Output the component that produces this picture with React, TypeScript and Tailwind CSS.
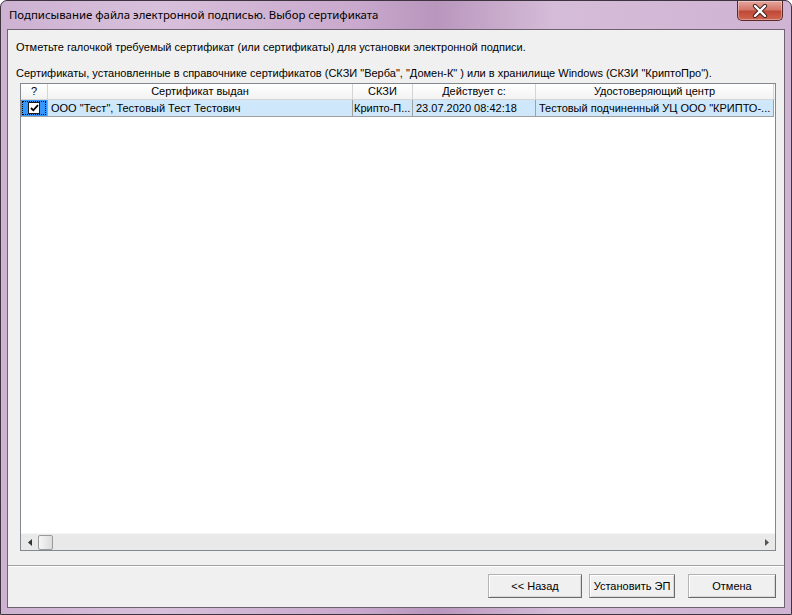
import React from "react";

const F = { fontFamily: '"Liberation Sans", Arial, sans-serif' };

function CloseBtn() {
  return (
    <div className="absolute right-[8px] top-0 flex h-[20px] w-[46px] items-center justify-center rounded-b-[5px] border border-t-0 border-[#5a2a2a] bg-[linear-gradient(#e4a89e_0%,#d4766a_45%,#c04a38_55%,#cf6450_100%)] shadow-[inset_0_0_0_1px_rgba(255,255,255,0.35)]">
      <svg width="16" height="14" viewBox="0 0 16 14">
        <path d="M3 2 L13 12 M13 2 L3 12" stroke="#3a1a1a" strokeWidth="4.2" strokeLinecap="round" />
        <path d="M3 2 L13 12 M13 2 L3 12" stroke="#ffffff" strokeWidth="2.4" strokeLinecap="round" />
      </svg>
    </div>
  );
}

function Cell({ w, children, className = "" }: { w: string; children?: React.ReactNode; className?: string }) {
  return (
    <div className={`${w} shrink-0 overflow-hidden whitespace-nowrap ${className}`}>{children}</div>
  );
}

export default function App() {
  return (
    <div
      className="relative h-[615px] w-[792px] overflow-hidden rounded-t-[7px] border border-[#3e3440] bg-[linear-gradient(90deg,#cdb2d2_0%,#d8c0db_20%,#c9a9cd_45%,#b996bd_55%,#d5bcd8_70%,#cfb4d3_100%)] text-[11px] text-black"
      style={F}
    >
      <div className="flex h-[28px] items-center pl-[8px]">
        <span className="text-[11.4px] leading-none" style={{ fontFamily: '"Noto Sans", "Open Sans", sans-serif' }}>
          Подписывание файла электронной подписью. Выбор сертификата
        </span>
      </div>
      <CloseBtn />
      <div className="mx-[6px] flex h-[579px] flex-col border border-[#6e6170] bg-[#f0f0f0]">
        <div className="pl-[8px] pt-[10px] leading-[14px]">
          Отметьте галочкой требуемый сертификат (или сертификаты) для установки электронной подписи.
        </div>
        <div className="mt-[12px] pl-[8px] leading-[14px]">
          Сертификаты, установленные в справочнике сертификатов (СКЗИ "Верба", "Домен-К" ) или в хранилище Windows (СКЗИ "КриптоПро").
        </div>
        <div className="ml-[12px] mt-[3px] flex h-[468px] w-[756px] flex-col border border-[#828790] bg-white">
          {/* header */}
          <div className="flex h-[16px] border-b border-[#d5d5d5] bg-[linear-gradient(#ffffff,#f3f3f3)] leading-[15px]">
            <Cell w="w-[27px]" className="border-r border-[#d5d5d5] text-center">?</Cell>
            <Cell w="w-[305px]" className="border-r border-[#d5d5d5] text-center">Сертификат выдан</Cell>
            <Cell w="w-[60px]" className="border-r border-[#d5d5d5] text-center">СКЗИ</Cell>
            <Cell w="w-[123px]" className="border-r border-[#d5d5d5] text-center">Действует с:</Cell>
            <Cell w="w-[238px]" className="border-r border-[#d5d5d5] text-center">Удостоверяющий центр</Cell>
          </div>
          {/* row */}
          <div className="flex h-[17px] w-[753px] border-b border-[#a0a0a0] leading-[16px]">
            <Cell w="w-[27px]" className="border-r border-[#a0a0a0] bg-[#3399ff] p-[1px]">
              <div className="flex h-full w-full items-center justify-center border border-dotted border-black">
                <div className="flex h-[12px] w-[12px] items-center justify-center border border-[#1c1c1c] bg-white">
                  <svg width="9" height="8" viewBox="0 0 9 8">
                    <path d="M1 4 L3.3 6.3 L8 1.2" stroke="#000" strokeWidth="1.8" fill="none" />
                  </svg>
                </div>
              </div>
            </Cell>
            <Cell w="w-[305px]" className="border-r border-[#a0a0a0] bg-[#cfe7fb] pl-[3px]">ООО "Тест", Тестовый Тест Тестович</Cell>
            <Cell w="w-[60px]" className="border-r border-[#a0a0a0] bg-[#cfe7fb] pl-[1px]">Крипто-П...</Cell>
            <Cell w="w-[123px]" className="border-r border-[#a0a0a0] bg-[#cfe7fb] pl-[3px]">23.07.2020 08:42:18</Cell>
            <Cell w="w-[238px]" className="border-r border-[#a0a0a0] bg-[#cfe7fb] pl-[3px]">Тестовый подчиненный УЦ ООО "КРИПТО-...</Cell>
          </div>
          <div className="flex-1" />
          {/* h scrollbar */}
          <div className="flex h-[17px] items-center border-t border-[#f6f6f6] bg-[#e9e9e9]">
            <div className="flex h-full w-[17px] items-center justify-center">
              <svg width="4" height="7" viewBox="0 0 4 7"><path d="M4 0 L0 3.5 L4 7 Z" fill="#333" /></svg>
            </div>
            <div className="h-[15px] w-[15px] rounded-[2px] border border-[#9a9a9a] bg-[linear-gradient(90deg,#f6f6f6,#dcdcdc)]" />
            <div className="flex-1" />
            <div className="flex h-full w-[17px] items-center justify-center">
              <svg width="4" height="7" viewBox="0 0 4 7"><path d="M0 0 L4 3.5 L0 7 Z" fill="#555" /></svg>
            </div>
          </div>
        </div>
        <div className="mt-[14px] h-[1px] bg-[#a0a0a0]" />
        <div className="border-t border-white" />
        <div className="mt-[7px] flex justify-end gap-[7px] pr-[8px]">
          {["<< Назад", "Установить ЭП", "Отмена"].map((t, i) => (
            <button
              key={t}
              className={`h-[24px] ${i === 0 ? "w-[94px]" : i === 1 ? "w-[86px]" : "w-[88px]"} ${i === 1 ? "mr-[6px]" : ""} border border-[#b4b4b4] border-b-[#6a6a6a] border-r-[#6a6a6a] bg-[#f0f0f0] shadow-[inset_1px_1px_0_#ffffff,inset_-1px_-1px_0_#d8d8d8] text-[11px] leading-none text-black`}
              style={F}
            >
              {t}
            </button>
          ))}
        </div>
      </div>
    </div>
  );
}
